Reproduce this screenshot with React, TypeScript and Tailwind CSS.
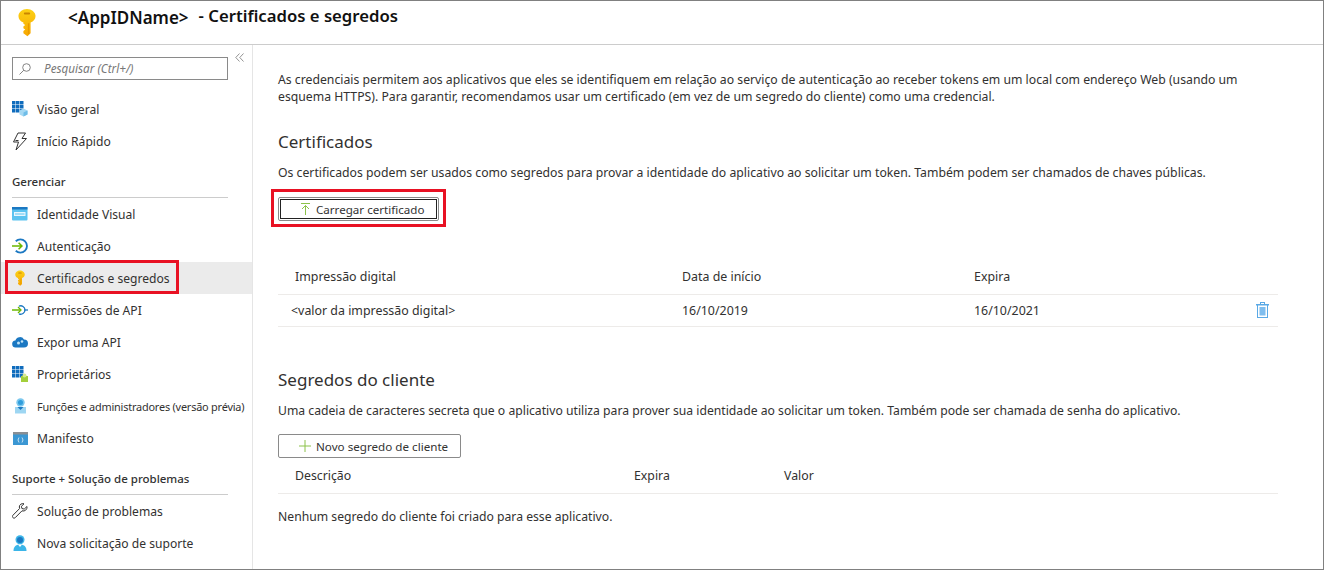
import React from "react";

const KeyIcon = ({ size = 20, id }: { size?: number; id: string }) => (
  <svg width={size} height={size * 1.6} viewBox="0 0 20 32">
    <defs>
      <linearGradient id={id} x1="0" y1="0" x2="0" y2="1">
        <stop offset="0" stopColor="#fcd116" />
        <stop offset="1" stopColor="#f7a600" />
      </linearGradient>
    </defs>
    <path d="M10 1c5 0 9.500 3.500 9.500 8 0 3.500-2.300 6-5.500 7.200V28l-3.500 3.500L6 28v-2.500l2-1.500-2-1.500v-2l2-1.500-2-1.500v-1.300C2.700 15 .5 12.500.5 9 .5 4.500 5 1 10 1z" fill={`url(#${id})`} />
    <rect x="6.500" y="5" width="7" height="2.200" rx="1.100" fill="#c98500" />
    <rect x="11" y="17" width="1.500" height="12" fill="#e89a00" />
  </svg>
);

const icons: Record<string, React.ReactNode> = {
  overview: (
    <svg width="16" height="16" viewBox="0 0 16 16">
      {[0, 4, 8].map((y) =>
        [0, 4, 8].map((x) => <rect key={`${x}-${y}`} x={x} y={y} width="3.500" height="3.500" fill="#0f6cbd" />)
      )}
      <path d="M11.500 7.500l4 2v4l-4 2-4-2v-4z" fill="#a5d8f3" />
      <path d="M11.500 11.500l4-2v4l-4 2z" fill="#6fbde8" />
    </svg>
  ),
  bolt: (
    <svg width="16" height="19" viewBox="0 0 16 19" fill="none" stroke="#333" strokeWidth="1">
      <path d="M6 1h7.500L10 6.500h4.500L4 18l2.500-8H1.500z" />
      <path d="M3.500 8.500h3" />
    </svg>
  ),
  brand: (
    <svg width="16" height="14" viewBox="0 0 16 14">
      <rect x="0" y="0" width="15.500" height="13.500" rx="1" fill="#5cc3f0" />
      <rect x="0" y="0" width="15.500" height="2.500" fill="#1b78c2" />
      <rect x="2" y="5" width="11.500" height="4" fill="#e8f6fd" />
      <rect x="3" y="6.500" width="9.500" height="1" fill="#5cc3f0" />
    </svg>
  ),
  auth: (
    <svg width="16" height="16" viewBox="0 0 17 17" fill="none">
      <path d="M4 3.500A7 7 0 1 1 4 13.500" stroke="#1b78c2" strokeWidth="2" />
      <path d="M0 8.500h10M7 5l3.500 3.500L7 12" stroke="#6bb700" strokeWidth="1.700" />
    </svg>
  ),
  key: <KeyIcon size={10} id="k2" />,
  perm: (
    <svg width="16" height="10" viewBox="0 0 16 10" fill="none">
      <path d="M0 5h8" stroke="#6bb700" strokeWidth="1.500" />
      <path d="M6 2l3 3-3 3" stroke="#6bb700" strokeWidth="1.300" />
      <path d="M7 1.200a4.200 4.200 0 1 1 0 7.600" stroke="#1b78c2" strokeWidth="1.300" />
      <path d="M12 5h4" stroke="#1b78c2" strokeWidth="1.300" />
    </svg>
  ),
  cloud: (
    <svg width="16" height="12" viewBox="0 0 16 12">
      <path d="M4 11.500a3.500 3.500 0 0 1-.6-7A4.700 4.700 0 0 1 12 3.500a4 4 0 0 1 0 8z" fill="#1b78c2" />
      <circle cx="6.500" cy="7" r="1.500" fill="#bfe3f7" />
      <circle cx="10" cy="5.500" r="1.300" fill="#bfe3f7" />
    </svg>
  ),
  owners: (
    <svg width="16" height="16" viewBox="0 0 16 16">
      {[0, 4, 8].map((y) =>
        [0, 4, 8].map((x) => <rect key={`${x}-${y}`} x={x} y={y} width="3.500" height="3.500" fill="#0f6cbd" />)
      )}
      <rect x="9" y="10" width="7" height="6" fill="#a4cf3b" />
      <circle cx="12.500" cy="9.500" r="2" fill="#d5e88f" />
    </svg>
  ),
  roles: (
    <svg width="13" height="16" viewBox="0 0 13 16">
      <circle cx="6.500" cy="4.500" r="4.200" fill="#7cc8ee" />
      <circle cx="6.500" cy="4.500" r="2.500" fill="#2f9ddc" />
      <path d="M1 9h11v6.500H1z" fill="#9ed6f2" />
      <path d="M3.500 9h6L6.500 12z" fill="#1b78c2" />
    </svg>
  ),
  manifest: (
    <svg width="15" height="13" viewBox="0 0 15 13">
      <rect x="0" y="0" width="15" height="13" fill="#3b97d3" />
      <rect x="0" y="0" width="15" height="2.500" fill="#8a8f94" />
      <path d="M6 5.500L5 8l1 2.500M9 5.500L10 8l-1 2.500" stroke="#fff" strokeWidth="0.700" fill="none" />
    </svg>
  ),
  wrench: (
    <svg width="16" height="16" viewBox="0 0 16 16" fill="none" stroke="#333" strokeWidth="1">
      <path d="M15 3.500l-2.800 2.600-2.300-.6-.5-2.200L12 .8C9.800 0 7.300 1.500 7.300 4c0 .6.100 1.100.3 1.500L1 12.200c-.8.800-.8 1.800-.1 2.400.7.700 1.700.7 2.400 0L10 7.800c2.800.9 5.500-1.500 5-4.300z" />
    </svg>
  ),
  support: (
    <svg width="14" height="16" viewBox="0 0 14 16">
      <circle cx="7" cy="4.800" r="4.500" fill="#3bb5e8" />
      <circle cx="7" cy="5" r="3" fill="#1b78c2" />
      <path d="M0.500 16c0-4 2-6.500 6.500-6.500s6.500 2.500 6.500 6.500z" fill="#3bb5e8" />
      <path d="M5 9.500h4L7 12z" fill="#fff" />
    </svg>
  ),
};

const Row = ({ icon, label, active, small }: { icon: string; label: string; active?: boolean; small?: boolean }) => (
  <div className={`relative flex h-8 items-center ${active ? "bg-[#ebebeb]" : ""}`}>
    <span className="flex w-[36px] shrink-0 items-center justify-center pl-[2px]">{icons[icon]}</span>
    <span className={`whitespace-nowrap ${small ? "text-[10.9px] tracking-[-0.2px]" : ""}`}>{label}</span>
    {active && <span className="absolute left-[4px] top-[-2px] h-[34px] w-[174px] border-[3px] border-[#e81123]" />}
  </div>
);

const Heading = ({ label }: { label: string }) => (
  <div className="mt-[16px] text-[11.5px]">
    <div className="ml-[11px] h-[25px] w-[216px] border-b border-[#ccc] font-medium whitespace-nowrap text-[#333]">{label}</div>
  </div>
);

export default function App() {
  return (
    <div
      className="flex h-[570px] w-[1324px] flex-col overflow-hidden border border-[#808080] bg-white text-[12.2px] leading-[17px] text-[#323130]"
      style={{ fontFamily: '"Noto Sans", "Open Sans", sans-serif' }}
    >
      <header className="flex h-[44px] shrink-0 items-start border-b border-[#ccc]">
        <span className="ml-[17px] mt-[7px]"><KeyIcon size={18} id="k1" /></span>
        <h1 className="ml-[32px] mt-[3px] flex items-start whitespace-nowrap text-[#111]">
          <span className="mt-[2px] text-[17px] leading-[24px] font-semibold">&lt;AppIDName&gt;</span>
          <span className="ml-[10px] text-[16.7px] leading-[24px] font-semibold">- Certificados e segredos</span>
        </h1>
      </header>
      <div className="flex min-h-0 flex-1">
        <aside className="relative w-[252px] shrink-0 border-r border-[#e5e5e5] text-[12.1px]">
          <svg className="absolute right-[8px] top-[8px]" width="9" height="9" viewBox="0 0 9 9" fill="none" stroke="#777" strokeWidth="0.800">
            <path d="M4.500 0.500L0.800 4.500L4.500 8.500M8.500 0.500L4.800 4.500L8.500 8.500" />
          </svg>
          <div className="mt-[12px] ml-[11px] flex h-[23px] w-[216px] items-center border border-[#8a8a8a] pl-[6px]">
            <svg width="12" height="12" viewBox="0 0 12 12" fill="none" stroke="#777" strokeWidth="0.900">
              <circle cx="7.500" cy="4.500" r="3.800" />
              <path d="M4.800 7.200L0.500 11.500" />
            </svg>
            <span className="ml-[13px] text-[11.7px] italic text-[#777]">Pesquisar (Ctrl+/)</span>
          </div>
          <div className="mt-[13px]">
            <Row icon="overview" label="Visão geral" />
            <Row icon="bolt" label="Início Rápido" />
          </div>
          <Heading label="Gerenciar" />
          <div>
            <Row icon="brand" label="Identidade Visual" />
            <Row icon="auth" label="Autenticação" />
            <Row icon="key" label="Certificados e segredos" active />
            <Row icon="perm" label="Permissões de API" />
            <Row icon="cloud" label="Expor uma API" />
            <Row icon="owners" label="Proprietários" />
            <Row icon="roles" label="Funções e administradores (versão prévia)" small />
            <Row icon="manifest" label="Manifesto" />
          </div>
          <Heading label="Suporte + Solução de problemas" />
          <div>
            <Row icon="wrench" label="Solução de problemas" />
            <Row icon="support" label="Nova solicitação de suporte" />
          </div>
        </aside>
        <main className="min-w-0 flex-1 pl-[25px] pr-[45px]">
          <p className="mt-[26px] w-[1000px] text-[12.24px]">
            As credenciais permitem aos aplicativos que eles se identifiquem em relação ao serviço de autenticação ao receber tokens em um local com endereço Web (usando um esquema HTTPS). Para garantir, recomendamos usar um certificado (em vez de um segredo do cliente) como uma credencial.
          </p>
          <h2 className="mt-[25px] text-[17px] leading-[24px]">Certificados</h2>
          <p className="mt-[10px] whitespace-nowrap text-[12.24px]">Os certificados podem ser usados como segredos para provar a identidade do aplicativo ao solicitar um token. Também podem ser chamados de chaves públicas.</p>
          <div className="ml-[-7px] mt-[8px] flex w-[175px] border-[3px] border-[#e81123] px-[4px] pt-[5px] pb-[3px]">
            <div className="flex h-[24px] w-[161px] items-center rounded-[2px] border border-[#8a8a8a] p-[1px]">
              <div className="flex h-full w-full items-center gap-[5px] border border-[#222] pl-[19px]">
                <svg width="11" height="12" viewBox="0 0 11 12" fill="none" stroke="#8cc24a" strokeWidth="1">
                  <path d="M1 .5h9M5.500 12V2.500M2 6l3.500-3.500L9 6" />
                </svg>
                <span className="text-[11.6px] text-[#333]">Carregar certificado</span>
              </div>
            </div>
          </div>
          <div className="mt-[36px] grid h-[32px] grid-cols-[387px_292px_1fr] items-center border-b border-[#edebe9] pb-[4px] pl-[17px] text-[12.4px]">
            <span>Impressão digital</span><span>Data de início</span><span>Expira</span>
          </div>
          <div className="relative grid h-[32px] grid-cols-[391px_292px_1fr] items-center border-b border-[#edebe9] pl-[13px] text-[12.4px]">
            <span>&lt;valor da impressão digital&gt;</span><span>16/10/2019</span><span>16/10/2021</span>
            <svg className="absolute right-[9px] top-[7px]" width="13" height="16" viewBox="0 0 13 16">
              <rect x="4.500" y="0.500" width="4" height="2" fill="none" stroke="#5aa9e6" />
              <rect x="0" y="2" width="13" height="1.500" fill="#5aa9e6" />
              <rect x="1.500" y="3" width="10" height="12.500" fill="#fff" stroke="#5aa9e6" />
              <rect x="3.500" y="5" width="6" height="8.500" fill="#7fbdee" />
            </svg>
          </div>
          <h2 className="mt-[41px] text-[17px] leading-[24px]">Segredos do cliente</h2>
          <p className="mt-[10px] whitespace-nowrap">Uma cadeia de caracteres secreta que o aplicativo utiliza para prover sua identidade ao solicitar um token. Também pode ser chamada de senha do aplicativo.</p>
          <div className="mt-[15px] flex h-[24px] w-[183px] items-center gap-[5px] rounded-[2px] border border-[#8a8a8a] pl-[20px]">
            <svg width="12" height="12" viewBox="0 0 12 12" stroke="#8cc24a" strokeWidth="1">
              <path d="M6 0v12M0 6h12" />
            </svg>
            <span className="text-[11.65px] text-[#333]">Novo segredo de cliente</span>
          </div>
          <div className="grid h-[36px] grid-cols-[339px_150px_1fr] items-center border-b border-[#edebe9] pb-[1px] pl-[17px] text-[12.3px]">
            <span>Descrição</span><span>Expira</span><span>Valor</span>
          </div>
          <p className="mt-[14px]">Nenhum segredo do cliente foi criado para esse aplicativo.</p>
        </main>
      </div>
    </div>
  );
}
